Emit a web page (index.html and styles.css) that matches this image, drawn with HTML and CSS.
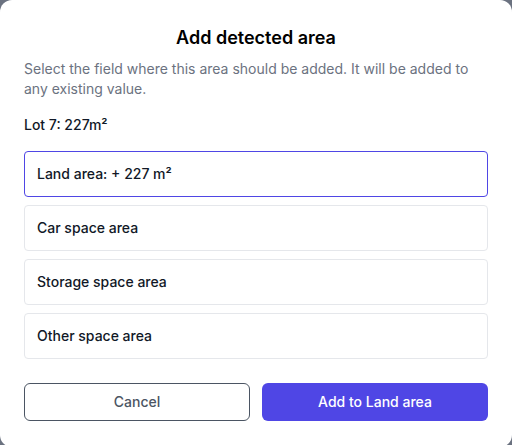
FILE: index.html
```html
<!DOCTYPE html>
<html>
  <head>
    <meta charset="utf-8">
    <title>Add detected area</title>
    <link rel="stylesheet" href="styles.css">
  </head>
  <body>
    <div class="dialog">
      <h2 class="dialog-title">Add detected area</h2>
      <p class="dialog-message">Select the field where this area should be added. It will be added to any existing value.</p>
      <div class="lot-label">Lot 7: 227m²</div>

      <div class="options">
        <button class="option selected">Land area: + 227 m²</button>
        <button class="option">Car space area</button>
        <button class="option">Storage space area</button>
        <button class="option">Other space area</button>
      </div>

      <div class="dialog-buttons">
        <button class="btn-cancel">Cancel</button>
        <button class="btn-confirm">Add to Land area</button>
      </div>
    </div>
  </body>
</html>
```

FILE: styles.css
```css
:root {
  --primary: #4f46e5;
  --text: #111827;
  --text-secondary: #6b7280;
  --border: #e5e7eb;
  --overlay: #6b7280;
}

body {
  margin: 0;
  height: 445px;
  overflow: hidden;
  font-family: Inter, "Noto Sans", sans-serif;
  background: var(--overlay);
}

.dialog {
  box-sizing: border-box;
  height: 447px;
  padding: 24px;
  background: #ffffff;
  border-radius: 12px;
  display: flex;
  flex-direction: column;
}

.dialog-title {
  margin: 0;
  font-size: 18px;
  line-height: 28px;
  font-weight: 600;
  text-align: center;
  color: #000000;
}

.dialog-message {
  margin: 7px 0 0;
  font-size: 14px;
  line-height: 20px;
  color: var(--text-secondary);
}

.lot-label {
  margin-top: 16px;
  font-size: 14px;
  line-height: 20px;
  font-weight: 500;
  color: var(--text);
}

.options {
  margin-top: 16px;
  display: flex;
  flex-direction: column;
  gap: 8px;
}

button {
  font-family: inherit;
  font-size: 14px;
  line-height: 20px;
  cursor: pointer;
}

.option {
  padding: 12px;
  text-align: left;
  font-weight: 500;
  color: var(--text);
  background: #ffffff;
  border: 1px solid var(--border);
  border-radius: 4px;
}

.option.selected {
  border-color: var(--primary);
}

.dialog-buttons {
  margin-top: 24px;
  display: grid;
  grid-template-columns: 1fr 1fr;
  gap: 12px;
}

.dialog-buttons button {
  height: 38px;
  border-radius: 6px;
  font-weight: 500;
}

.btn-cancel {
  background: #ffffff;
  color: #4b5563;
  border: 1px solid #4b5563;
}

.btn-confirm {
  background: var(--primary);
  color: #ffffff;
  border: none;
}
```
